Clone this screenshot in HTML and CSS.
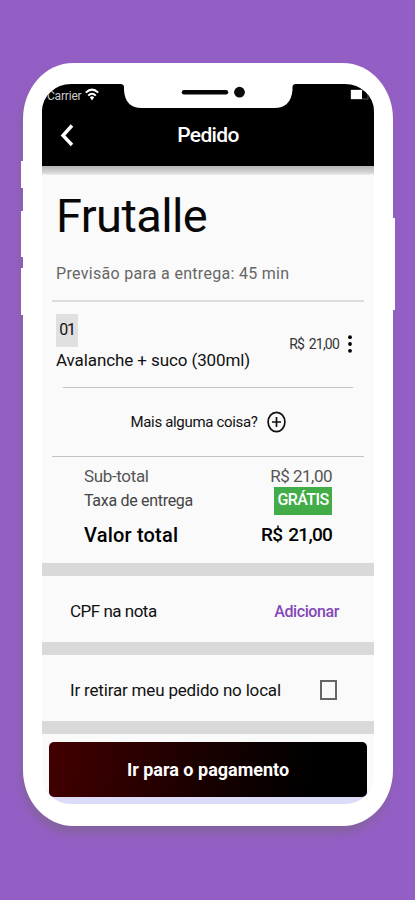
FILE: index.html
```html
<!DOCTYPE html>
<html lang="pt-BR">
<head>
<meta charset="utf-8">
<title>Pedido</title>
<link rel="stylesheet" href="styles.css">
</head>
<body>
<div class="phone">
  <i class="key key-mute"></i><i class="key key-up"></i><i class="key key-down"></i><i class="key key-power"></i>
  <main class="screen">
    <header class="top">
      <div class="status">
        <span class="carrier">Carrier</span>
        <svg class="wifi" width="14" height="13" viewBox="0 0 14 13" fill="none" stroke="#fff" stroke-width="2"><path d="M.8 4.600Q7-1.400 13.200 4.600M3.200 7.600Q7 3.800 10.800 7.600"/><path d="M4.800 9.300Q7 7.300 9.200 9.300L7 12.400z" fill="#fff" stroke="none"/></svg>
        <svg class="battery" width="19" height="12" viewBox="0 0 19 12"><path d="M1 1h15l2 3v6H1z" fill="none" stroke="#555"/><path d="M1 1h11v9H1z" fill="#fff"/></svg>
      </div>
      <div class="nav">
        <svg class="back" width="14" height="24" viewBox="0 0 14 24" fill="none" stroke="#fff" stroke-width="3.400"><path d="M12 2.500L3 12.500l9 9.500"/></svg>
        <h1 class="nav-title">Pedido</h1>
      </div>
    </header>
    <div class="top-shadow"></div>
    <section class="store">
      <h2 class="name">Frutalle</h2>
      <p class="eta">Previsão para a entrega: 45 min</p>
    </section>
    <hr class="rule thick">
    <section class="item">
      <div>
        <span class="qty">01</span>
        <p class="product">Avalanche + suco (300ml)</p>
      </div>
      <div class="item-side">
        <span class="price">R$ 21,00</span>
        <svg class="dots" width="4" height="18" viewBox="0 0 4 18"><circle cx="2" cy="2.200" r="1.900"/><circle cx="2" cy="9" r="1.900"/><circle cx="2" cy="15.800" r="1.900"/></svg>
      </div>
    </section>
    <hr class="rule short">
    <section class="more">
      <span class="more-text">Mais alguma coisa?</span>
      <svg width="19" height="22" viewBox="0 0 19 22" fill="none" stroke="#111" stroke-width="1.700"><ellipse cx="9.500" cy="11" rx="8.400" ry="9.700"/><path d="M9.500 6v10M5 11h9"/></svg>
    </section>
    <hr class="rule">
    <section class="totals">
      <div class="line sub"><span class="sub-label">Sub-total</span><span class="sub-value">R$ 21,00</span></div>
      <div class="line fee"><span class="fee-label">Taxa de entrega</span><span class="free">GRÁTIS</span></div>
      <div class="line total"><span class="total-label">Valor total</span><span class="total-value">R$ 21,00</span></div>
    </section>
    <div class="band"></div>
    <section class="option"><span class="cpf">CPF na nota</span><a class="add">Adicionar</a></section>
    <div class="band"></div>
    <section class="option pickup"><span class="pickup-label">Ir retirar meu pedido no local</span><span class="check"></span></section>
    <div class="band"></div>
    <footer class="footer"><div class="pay"><span class="pay-text">Ir para o pagamento</span></div></footer>
  </main>
  <svg class="notch" width="176" height="27" viewBox="0 0 176 27"><path d="M0 0h176v1q-3.500 0-3.500 3v3Q171 25 154 25H22Q5 25 4 7V4q0-3-4-3z" fill="#fff"/><path d="M64 9.200h42" stroke="#050505" stroke-width="4.400" stroke-linecap="round"/><circle cx="119.500" cy="9.200" r="5.400" fill="#0b0b0b"/></svg>
</div>
</body>
</html>
```
FILE: styles.css
```css
* { box-sizing: border-box; margin: 0; padding: 0; }
body { width: 415px; height: 900px; overflow: hidden; background: #945fc5; font-family: Roboto, sans-serif; color: #111; }
svg { display: block; flex: none; }
span, a, h1, h2, p { white-space: nowrap; font-weight: 400; }
.phone { position: relative; width: 370px; height: 763px; margin: 63px 0 0 23px; padding: 21px 19px 23px; background: #fff; border-radius: 50px / 56px; box-shadow: -2px 7px 9px rgba(120, 100, 130, .55); }
.key { position: absolute; left: -2px; width: 3px; background: #fff; }
.key-mute { top: 98px; height: 27px; }
.key-up { top: 148px; height: 46px; }
.key-down { top: 205px; height: 47px; }
.key-power { left: 369px; top: 155px; height: 92px; }
.screen { display: flex; flex-direction: column; width: 332px; height: 720px; overflow: hidden; background: #fafafa; border-radius: 29px / 27px; }
.top { height: 82px; background: #000; color: #fff; flex: none; }
.status { display: flex; height: 24px; padding: 4px 5px 0 5px; }
.carrier { width: 35px; font-size: 12px; line-height: 16px; letter-spacing: -.2px; color: #ccc; }
.wifi { margin-left: 3px; }
.battery { margin-left: auto; margin-top: 1px; }
.nav { display: flex; align-items: center; height: 53px; padding: 0 18px; }
.nav-title { flex: 1; text-align: center; padding-right: 14px; font-size: 21px; font-weight: 500; letter-spacing: -.65px; }
.top-shadow { height: 9px; flex: none; background: linear-gradient(#b5b5b5, #d4d4d4 70%, #eee); }
.store { height: 125px; padding: 13px 14px 0; }
.name { height: 56px; line-height: 56px; font-size: 47px; letter-spacing: -.6px; color: #080808; }
.eta { margin-top: 20px; line-height: 20px; font-size: 16px; letter-spacing: .3px; color: #666; }
.rule { height: 1px; border: 0; margin: 0 10px; background: #c4c4c4; flex: none; }
.thick { height: 2px; background: #ddd; }
.short { margin: 0 21px; }
.item { display: flex; justify-content: space-between; height: 85px; padding: 12px 22px 0 14px; }
.qty { display: block; width: 22px; height: 33px; line-height: 31px; text-align: center; font-size: 16px; letter-spacing: -1.2px; background: #e0e0e0; }
.product { line-height: 24px; margin-top: 1px; font-size: 17px; letter-spacing: -.1px; }
.item-side { display: flex; align-items: center; gap: 9px; height: 60px; }
.price { font-size: 14px; letter-spacing: -.8px; word-spacing: 2px; color: #333; }
.more { display: flex; align-items: center; justify-content: center; gap: 9px; height: 68px; }
.more-text { font-size: 15px; letter-spacing: -.33px; }
.totals { height: 106px; padding: 7px 42px 0; }
.line { display: flex; justify-content: space-between; align-items: center; }
.sub { height: 23px; font-size: 17px; color: #555; }
.sub-label { letter-spacing: -.35px; }
.sub-value { letter-spacing: -.5px; }
.fee { height: 27px; font-size: 16px; letter-spacing: -.3px; color: #444; }
.free { width: 58px; height: 28px; line-height: 26px; text-align: center; background: #42ac48; color: #fff; font-weight: 500; font-size: 16px; letter-spacing: -.6px; }
.total { height: 41px; font-size: 20px; color: #000; }
.total span { font-weight: 500; }
.total-label { letter-spacing: .2px; }
.total-value { font-size: 19px; letter-spacing: -.75px; word-spacing: 2px; }
.band { height: 13px; background: #d9d9d9; flex: none; }
.option { display: flex; align-items: center; justify-content: space-between; height: 66px; padding: 4px 35px 0 28px; }
.cpf { font-size: 17px; letter-spacing: -.5px; }
.pickup-label { font-size: 17px; letter-spacing: -.18px; }
.add { font-size: 16px; font-weight: 500; letter-spacing: -.4px; color: #8448b8; }
.pickup { padding-right: 37px; }
.check { width: 17px; height: 20px; border: 2px solid #666; }
.footer { flex: 1; padding: 8px 7px 0; background: linear-gradient(#fafafa 55px, #dcdcf8 62px); }
.pay { height: 55px; display: flex; align-items: center; justify-content: center; border-radius: 5px; background: linear-gradient(100deg, #430000, #180000 50%, #000 82%); color: #fff; }
.pay-text { font-size: 18px; font-weight: 700; }
.notch { position: absolute; left: 97px; top: 20px; }
```
